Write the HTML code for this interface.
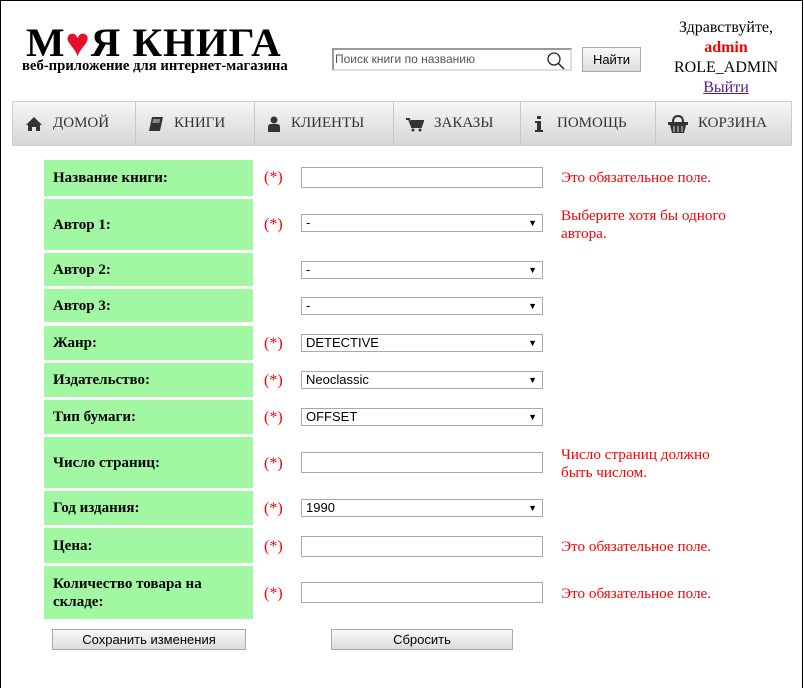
<!DOCTYPE html>
<html><head><meta charset="utf-8"><style>
*{box-sizing:border-box;margin:0;padding:0}
html,body{width:804px;height:688px;overflow:hidden}
body{background:#fff;font-family:"Liberation Serif",serif;position:relative}
.frame{position:absolute;left:0;top:0;width:803px;height:720px;border:1px solid #000}
.a{position:absolute}
.lab{position:absolute;left:44px;width:209px;background:#a2f8a2;font-weight:bold;font-size:15px;padding-left:9px;display:flex;align-items:center;line-height:18px}
.req{position:absolute;left:264px;color:red;font-size:16px}
.in{position:absolute;left:301px;width:242px;height:21px;border:1px solid #a9a9a9;background:#fff}
.sel{position:absolute;left:301px;width:242px;height:18px;border:1px solid #a9a9a9;background:#fff;font-family:"Liberation Sans",sans-serif;font-size:13px;padding-left:4px;line-height:16px}
.sel:after{content:"▼";position:absolute;right:5px;top:0;font-size:9px}
.err{position:absolute;left:561px;color:red;font-size:15.2px;line-height:18px}
.nav{position:absolute;left:12px;top:101px;width:780px;height:45px;border:1px solid #ccc;background:linear-gradient(#f6f6f6,#d6d6d6);display:flex}
.nav div{border-right:1px solid #c8c8c8;display:flex;align-items:center;font-size:15px;color:#333}
.nav div:last-child{border-right:none}
.nav svg{margin:0 10px 0 12px}
.btn{position:absolute;height:21px;border:1px solid #aaa;background:linear-gradient(#f8f8f8,#ddd);font-family:"Liberation Sans",sans-serif;font-size:13px;text-align:center;line-height:19px}
</style></head><body>
<div class="frame"></div>
<div class="a" style="left:26px;top:22px;font-size:40px;font-weight:bold;font-family:'Liberation Serif',serif;letter-spacing:1px;line-height:42px;white-space:nowrap;transform:scaleX(1.02);transform-origin:left">М<span style="color:#e4102a">♥</span>Я КНИГА</div>
<div class="a" style="left:22px;top:59px;font-size:14.7px;font-weight:bold;line-height:15px;white-space:nowrap">веб-приложение для интернет-магазина</div>
<div class="a" style="left:332px;top:48px;width:240px;height:23px;border:2px solid #ddd;border-top-color:#999;border-left-color:#999;font-family:'Liberation Sans',sans-serif;font-size:12px;color:#555;line-height:19px;padding-left:1px">Поиск книги по названию
<svg style="position:absolute;right:4px;top:1px" width="20" height="19"><circle cx="8" cy="8" r="6" fill="none" stroke="#222" stroke-width="1.3"/><line x1="12" y1="12" x2="18" y2="18" stroke="#222" stroke-width="1.5"/></svg></div>
<div class="btn" style="left:582px;top:47px;width:59px;height:25px;line-height:23px">Найти</div>
<div class="a" style="left:660px;top:18px;width:132px;text-align:center;font-size:16px;line-height:20px">Здравствуйте,<br><b style="color:red">admin</b><br>ROLE_ADMIN<br><span style="color:#551a8b;text-decoration:underline">Выйти</span></div>
<div class="nav">
<div style="width:123px"><svg width="18" height="16"><path d="M9 1L1 9h2v6h4v-4h4v4h4V9h2z" fill="#333"/></svg>ДОМОЙ</div>
<div style="width:119px"><svg width="16" height="16"><path d="M4 1h11l-3 14H1z" fill="#333"/><path d="M5 4h7M4.5 6h7" stroke="#ddd"/></svg>КНИГИ</div>
<div style="width:139px"><svg width="14" height="16"><circle cx="7" cy="4" r="3.5" fill="#333"/><path d="M1 16v-5q0-3 3-3h6q3 0 3 3v5z" fill="#333"/></svg>КЛИЕНТЫ</div>
<div style="width:127px"><svg width="18" height="16"><path d="M0 3h3l3 8h9l2-6H5" fill="none" stroke="#333" stroke-width="2"/><rect x="5" y="5" width="11" height="5" fill="#333"/><circle cx="7" cy="14" r="1.5" fill="#333"/><circle cx="14" cy="14" r="1.5" fill="#333"/></svg>ЗАКАЗЫ</div>
<div style="width:135px"><svg width="14" height="16"><rect x="4" y="0" width="4" height="3" fill="#333"/><path d="M2 5h6v9h2v2H2v-2h2V7H2z" fill="#333"/></svg>ПОМОЩЬ</div>
<div style="width:135px"><svg width="20" height="18"><path d="M5 7Q5 1 10 1T15 7" fill="none" stroke="#333" stroke-width="2"/><rect x="0" y="7" width="20" height="3" fill="#333"/><path d="M2 10h16l-2 8H4z" fill="#333"/><path d="M6 11v6M10 11v6M14 11v6" stroke="#ddd"/></svg>КОРЗИНА</div>
</div>

<div class="lab" style="top:160px;height:36px">Название книги:</div>
<div class="req" style="top:169px">(*)</div><div class="in" style="top:167px"></div>
<div class="err" style="top:169px">Это обязательное поле.</div>

<div class="lab" style="top:199px;height:51px">Автор 1:</div>
<div class="req" style="top:216px">(*)</div><div class="sel" style="top:214px">-</div>
<div class="err" style="top:207px">Выберите хотя бы одного<br>автора.</div>

<div class="lab" style="top:253px;height:33px">Автор 2:</div>
<div class="sel" style="top:261px">-</div>

<div class="lab" style="top:289px;height:33px">Автор 3:</div>
<div class="sel" style="top:297px">-</div>

<div class="lab" style="top:326px;height:34px">Жанр:</div>
<div class="req" style="top:335px">(*)</div><div class="sel" style="top:334px">DETECTIVE</div>

<div class="lab" style="top:363px;height:34px">Издательство:</div>
<div class="req" style="top:372px">(*)</div><div class="sel" style="top:371px">Neoclassic</div>

<div class="lab" style="top:400px;height:34px">Тип бумаги:</div>
<div class="req" style="top:409px">(*)</div><div class="sel" style="top:408px">OFFSET</div>

<div class="lab" style="top:437px;height:51px">Число страниц:</div>
<div class="req" style="top:455px">(*)</div><div class="in" style="top:452px"></div>
<div class="err" style="top:446px">Число страниц должно<br>быть числом.</div>

<div class="lab" style="top:491px;height:34px">Год издания:</div>
<div class="req" style="top:500px">(*)</div><div class="sel" style="top:499px">1990</div>

<div class="lab" style="top:528px;height:35px">Цена:</div>
<div class="req" style="top:538px">(*)</div><div class="in" style="top:536px"></div>
<div class="err" style="top:538px">Это обязательное поле.</div>

<div class="lab" style="top:566px;height:53px">Количество товара на<br>складе:</div>
<div class="req" style="top:585px">(*)</div><div class="in" style="top:582px"></div>
<div class="err" style="top:585px">Это обязательное поле.</div>

<div class="btn" style="left:52px;top:629px;width:194px">Сохранить изменения</div>
<div class="btn" style="left:331px;top:629px;width:182px">Сбросить</div>
</body></html>
